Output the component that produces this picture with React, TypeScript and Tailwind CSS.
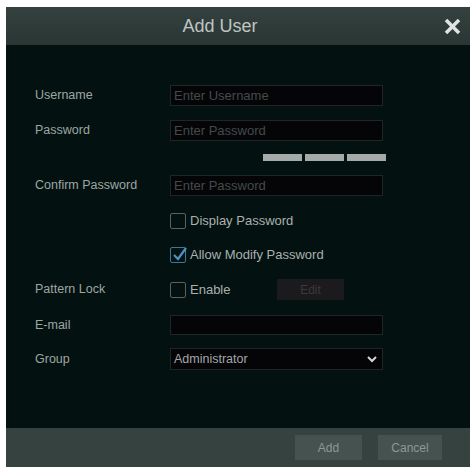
import React from 'react';

const font = { fontFamily: '"Liberation Sans", Arial, sans-serif' };

function Field({ placeholder, value }: { placeholder?: string; value?: string }) {
  return (
    <div className="flex h-[21px] w-[213px] items-center border border-[#1d2725] bg-[#050508] px-[3px] text-[13px]">
      {value ? (
        <span className="text-[#a7adab]">{value}</span>
      ) : (
        <span className="text-[#434b4a]">{placeholder}</span>
      )}
    </div>
  );
}

function Check({ checked, label }: { checked?: boolean; label: string }) {
  return (
    <div className="flex items-center gap-[4px]">
      <div
        className={
          checked
            ? 'relative h-[16px] w-[16px] rounded-[2px] border border-[#3a78a0]'
            : 'h-[16px] w-[16px] rounded-[2px] border border-[#59625f]'
        }
      >
        {checked && (
          <svg className="absolute -top-[2px] left-[1px]" width="16" height="16" viewBox="0 0 16 16">
            <polyline points="2,9 6,13 14,2" fill="none" stroke="#4c93c4" strokeWidth="2.2" />
          </svg>
        )}
      </div>
      <span className="text-[13px] text-[#aab0ae]">{label}</span>
    </div>
  );
}

function Row({ label, className, children }: { label?: string; className: string; children: React.ReactNode }) {
  return (
    <div className={`flex items-center ${className}`}>
      <div className="w-[135px] shrink-0 text-[12.5px] text-[#9ea6a4]">{label}</div>
      {children}
    </div>
  );
}

export default function App() {
  return (
    <div className="h-[468px] w-[476px] bg-white pl-[6px] pt-[7px]" style={font}>
      <div className="flex h-[460px] w-[464px] flex-col bg-[#031210]">
        <div className="flex h-[38px] shrink-0 items-center bg-gradient-to-b from-[#34413e] to-[#2a3633]">
          <div className="flex-1 text-center text-[18px] text-[#bfc5c3]">Add User</div>
          <div className="flex w-[36px] justify-center">
            <svg width="17" height="17" viewBox="0 0 17 17">
              <line x1="2" y1="2" x2="15" y2="15" stroke="#dfe3e2" strokeWidth="3.6" />
              <line x1="15" y1="2" x2="2" y2="15" stroke="#dfe3e2" strokeWidth="3.6" />
            </svg>
          </div>
        </div>

        <div className="flex flex-1 flex-col pl-[29px] pt-[40px]">
          <Row label="Username" className="h-[21px]">
            <Field placeholder="Enter Username" />
          </Row>
          <Row label="Password" className="mt-[14px] h-[21px]">
            <Field placeholder="Enter Password" />
          </Row>
          <Row className="mt-[13px] h-[7px]">
            <div className="ml-[93px] flex gap-[3px]">
              <div className="h-[7px] w-[39px] bg-[#a4aaa8]" />
              <div className="h-[7px] w-[39px] bg-[#a4aaa8]" />
              <div className="h-[7px] w-[39px] bg-[#a4aaa8]" />
            </div>
          </Row>
          <Row label="Confirm Password" className="mt-[14px] h-[21px]">
            <Field placeholder="Enter Password" />
          </Row>
          <Row className="mt-[17px] h-[16px]">
            <Check label="Display Password" />
          </Row>
          <Row className="mt-[18px] h-[16px]">
            <Check checked label="Allow Modify Password" />
          </Row>
          <Row label="Pattern Lock" className="mt-[16px] h-[21px]">
            <div className="w-[107px]">
              <Check label="Enable" />
            </div>
            <div className="flex h-[21px] w-[67px] items-center justify-center bg-[#1b1a1c] text-[12px] text-[#3b3b3d]">
              Edit
            </div>
          </Row>
          <Row label="E-mail" className="mt-[15px] h-[20px]">
            <div className="h-[20px] w-[213px] border border-[#1d2725] bg-[#050508]" />
          </Row>
          <Row label="Group" className="mt-[13px] h-[22px]">
            <div className="flex h-[22px] w-[213px] items-center justify-between border border-[#1d2725] bg-[#050508] pl-[3px] pr-[5px] text-[12.5px] text-[#a2a8a6]">
              <span>Administrator</span>
              <svg width="10" height="7" viewBox="0 0 10 7">
                <polyline points="1,1 5,5 9,1" fill="none" stroke="#d4d8d7" strokeWidth="2" />
              </svg>
            </div>
          </Row>
        </div>

        <div className="flex h-[39px] shrink-0 items-center justify-end gap-[16px] bg-[#35423f] pr-[28px]">
          <div className="flex h-[25px] w-[67px] items-center justify-center bg-[#45524f] text-[12px] text-[#8f9895]">
            Add
          </div>
          <div className="flex h-[25px] w-[64px] items-center justify-center bg-[#45524f] text-[12px] text-[#8f9895]">
            Cancel
          </div>
        </div>
      </div>
    </div>
  );
}
